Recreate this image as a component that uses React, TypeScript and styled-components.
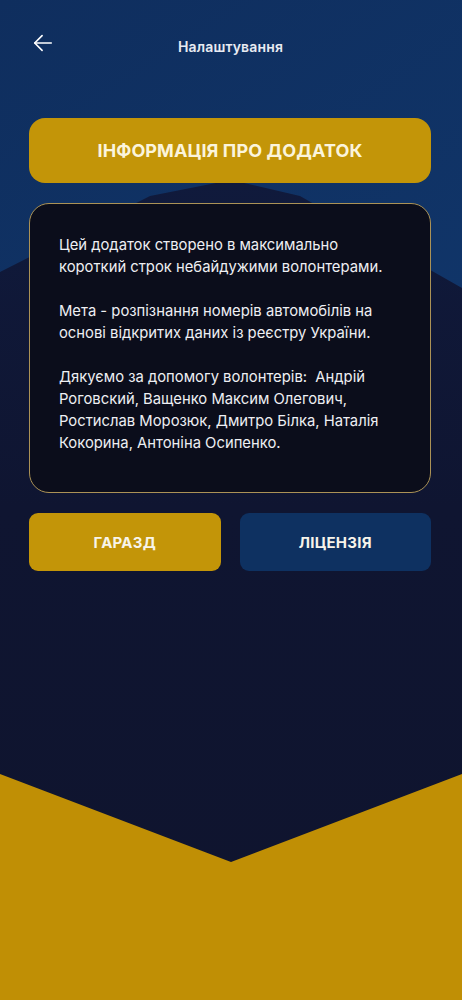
import React from "react";
import styled, { createGlobalStyle } from "styled-components";

const Global = createGlobalStyle`
  html, body { margin: 0; padding: 0; background: #0f1530; }
  * { box-sizing: border-box; }
  body { font-family: Inter, "Noto Sans", "DejaVu Sans", sans-serif; }
`;

const Screen = styled.div`
  position: relative;
  width: 462px;
  height: 1000px;
  overflow: hidden;
  background: #0f1530;
`;

const Backdrop = styled.svg`
  position: absolute;
  inset: 0;
  width: 462px;
  height: 1000px;
  z-index: 0;
`;

const Content = styled.div`
  position: relative;
  z-index: 1;
  display: flex;
  flex-direction: column;
  padding: 0 31px 0 29px;
`;

const Header = styled.header`
  position: relative;
  height: 92px;
  display: flex;
  align-items: center;
  justify-content: center;
`;

const BackButton = styled.button`
  position: absolute;
  left: 2px;
  top: 31px;
  width: 24px;
  height: 24px;
  padding: 0;
  border: none;
  background: none;
  color: #ffffff;
  display: flex;
  align-items: center;
  justify-content: center;
`;

const Title = styled.h1`
  margin: 0;
  margin-left: 1px;
  font-size: 14px;
  font-weight: 600;
  color: #e8ebf2;
  letter-spacing: 0.15px;
`;

const Banner = styled.div`
  margin-top: 26px;
  height: 65px;
  border-radius: 16px;
  background: #c39508;
  display: flex;
  align-items: center;
  justify-content: center;
  color: #fbf4dc;
  font-size: 18px;
  font-weight: 700;
  letter-spacing: 0.1px;
`;

const InfoCard = styled.section`
  margin-top: 20px;
  height: 290px;
  border-radius: 20px;
  background: #0b0d1b;
  border: 1px solid #ab9256;
  padding: 30px 20px 0 29px;
  color: #eeeff3;
  font-size: 14.8px;
  line-height: 22px;
`;

const Paragraph = styled.p`
  margin: 0 0 22px 0;
  white-space: nowrap;
`;

const ButtonRow = styled.div`
  margin-top: 20px;
  display: grid;
  grid-template-columns: 1fr 1fr;
  gap: 19px;
`;

const ActionButton = styled.button<{ $variant: "gold" | "blue" }>`
  height: 58px;
  border: none;
  border-radius: 9px;
  background: ${(p) => (p.$variant === "gold" ? "#c39508" : "#0e3161")};
  color: #f7f4ea;
  font-family: Inter, "Noto Sans", sans-serif;
  font-size: 15px;
  font-weight: 700;
  letter-spacing: 0.25px;
`;

export default function App() {
  return (
    <>
      <Global />
      <Screen>
        <Backdrop viewBox="0 0 462 1000" preserveAspectRatio="none">
          <defs>
            <linearGradient id="sky" x1="0" y1="0" x2="0.3" y2="1">
              <stop offset="0" stopColor="#0f2e5e" />
              <stop offset="1" stopColor="#113a71" />
            </linearGradient>
            <linearGradient id="navy" x1="0" y1="0" x2="0" y2="1">
              <stop offset="0" stopColor="#101a3c" />
              <stop offset="0.4" stopColor="#0f1531" />
              <stop offset="1" stopColor="#0f142e" />
            </linearGradient>
          </defs>
          <rect x="0" y="0" width="462" height="1000" fill="url(#sky)" />
          <polygon
            points="0,272 150,196 231,180 300,196 462,288 462,1000 0,1000"
            fill="url(#navy)"
          />
          <polygon points="0,774 231,862 462,774 462,1000 0,1000" fill="#c08f05" />
        </Backdrop>
        <Content>
          <Header>
            <BackButton aria-label="Назад">
              <svg width="22" height="22" viewBox="0 0 24 24" fill="none" stroke="currentColor" strokeWidth="1.8" strokeLinecap="round" strokeLinejoin="round">
                <path d="M21 12H3" />
                <path d="M11 4L3 12L11 20" />
              </svg>
            </BackButton>
            <Title>Налаштування</Title>
          </Header>
          <Banner>ІНФОРМАЦІЯ ПРО ДОДАТОК</Banner>
          <InfoCard>
            <Paragraph>
              Цей додаток створено в максимально
              <br />
              короткий строк небайдужими волонтерами.
            </Paragraph>
            <Paragraph>
              Мета - розпізнання номерів автомобілів на
              <br />
              основі відкритих даних із реєстру України.
            </Paragraph>
            <Paragraph>
              Дякуємо за допомогу волонтерів:&nbsp; Андрій
              <br />
              Роговский, Ващенко Максим Олегович,
              <br />
              Ростислав Морозюк, Дмитро Білка, Наталія
              <br />
              Кокорина, Антоніна Осипенко.
            </Paragraph>
          </InfoCard>
          <ButtonRow>
            <ActionButton $variant="gold">ГАРАЗД</ActionButton>
            <ActionButton $variant="blue">ЛІЦЕНЗІЯ</ActionButton>
          </ButtonRow>
        </Content>
      </Screen>
    </>
  );
}
